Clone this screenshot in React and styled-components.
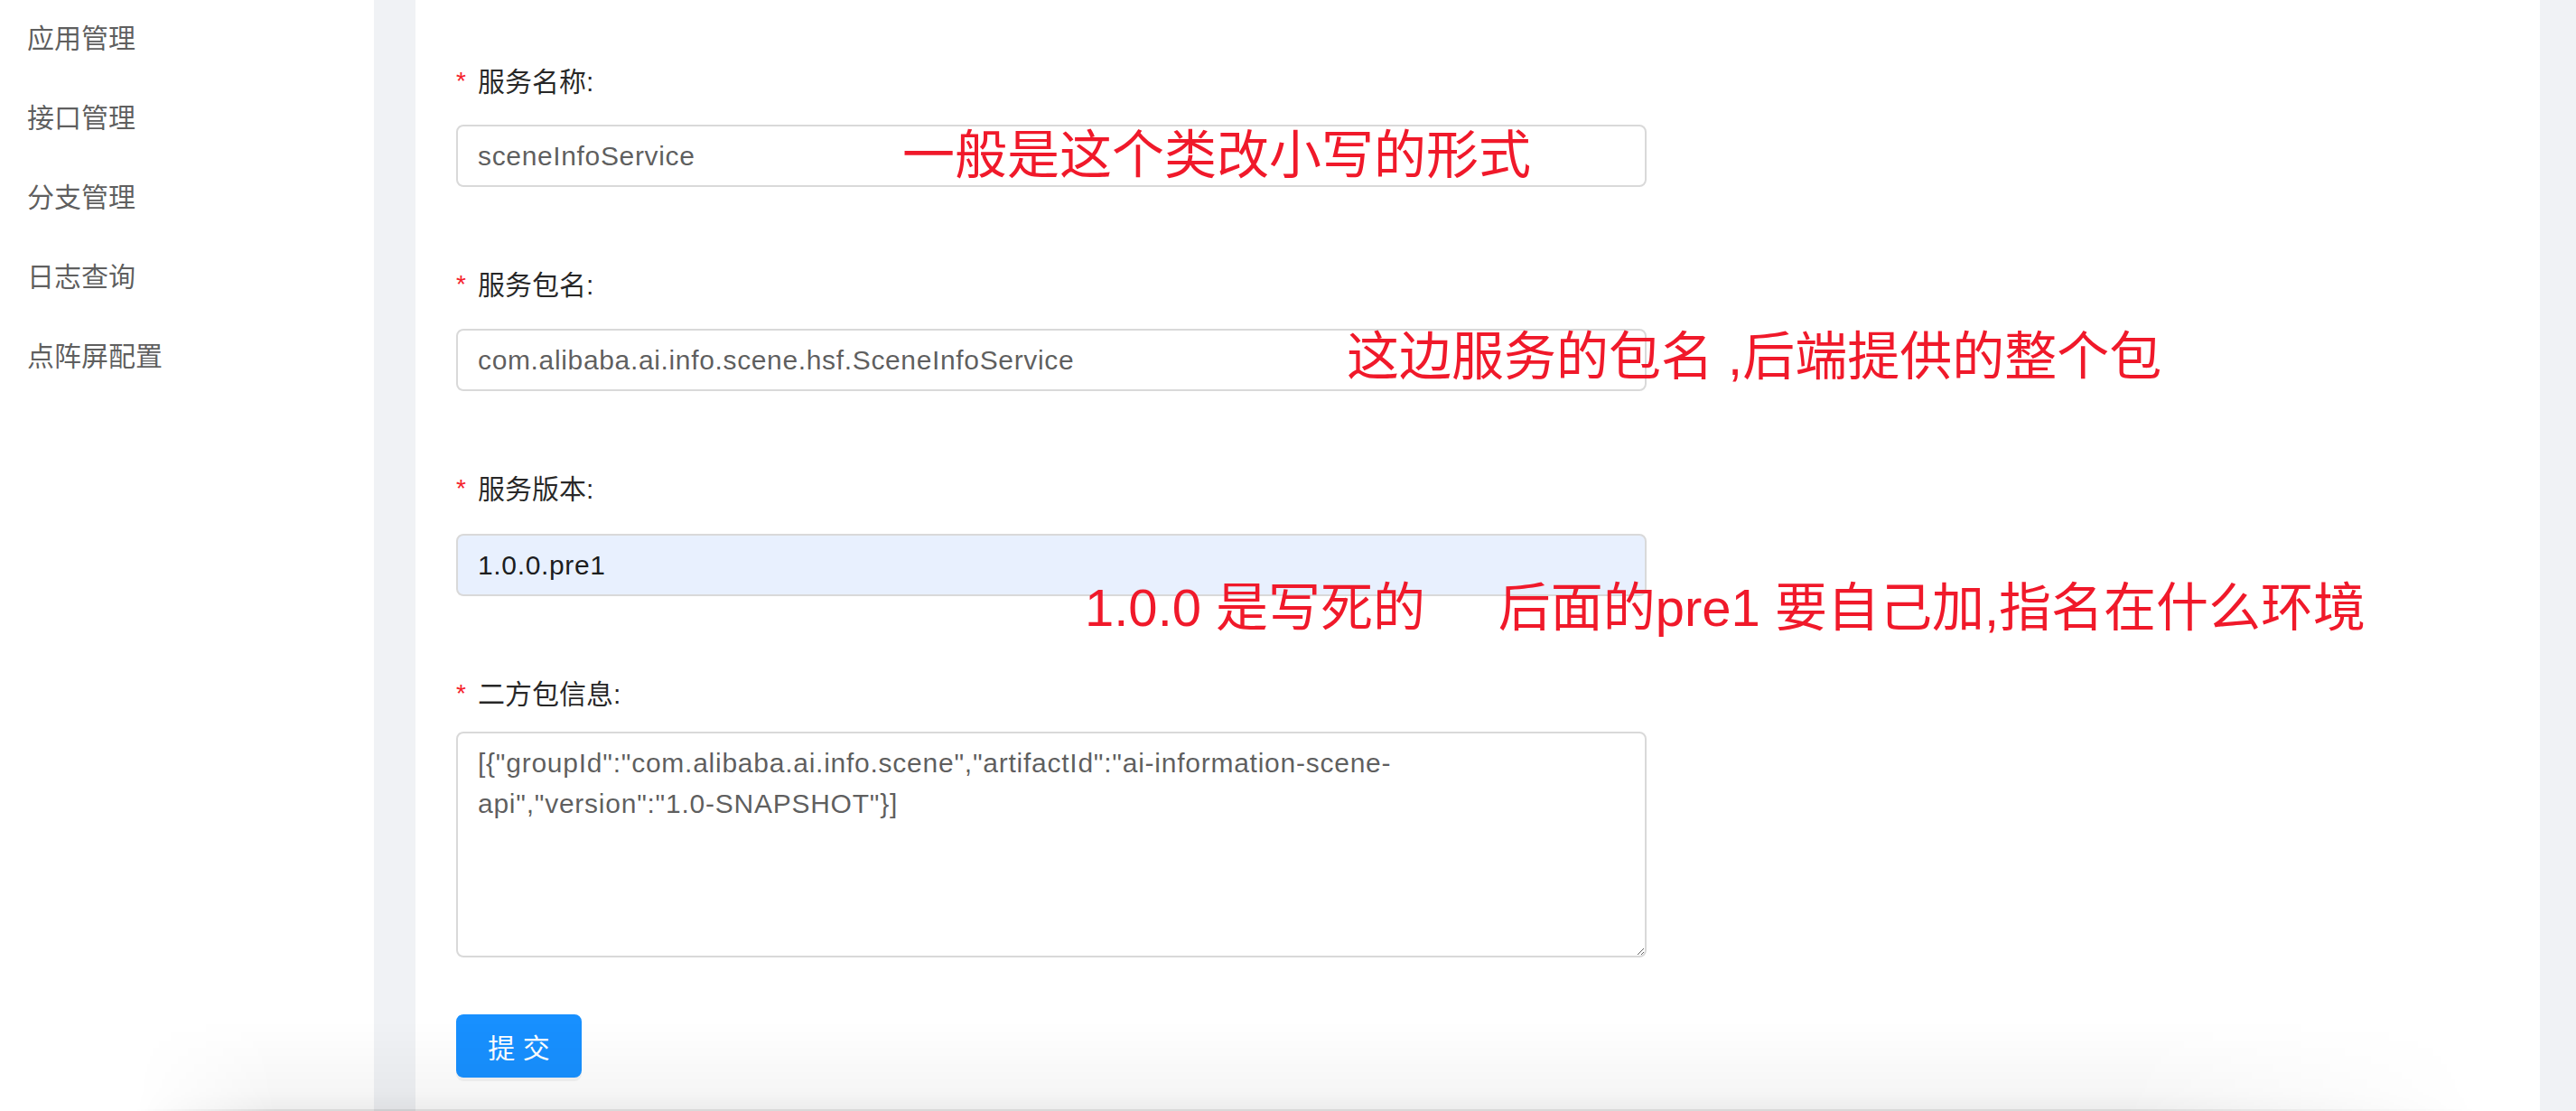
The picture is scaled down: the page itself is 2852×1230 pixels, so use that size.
import React from "react";
import styled, { createGlobalStyle } from "styled-components";

const Global = createGlobalStyle`
  html, body { margin: 0; padding: 0; background: #f0f2f5; }
  body { font-family: "Liberation Sans", "Noto Sans CJK SC", sans-serif; }
  * { box-sizing: border-box; }
`;

const FONT = `"Liberation Sans", "Noto Sans CJK SC", sans-serif`;

const Page = styled.div`
  position: relative;
  display: flex;
  width: 2852px;
  height: 1230px;
  overflow: hidden;
  background: #f0f2f5;
`;

const Sidebar = styled.nav`
  width: 414px;
  flex: none;
  background: #ffffff;
  display: flex;
  flex-direction: column;
  margin-top: -1px;
`;

const MenuItem = styled.div`
  height: 88px;
  line-height: 88px;
  padding-left: 30px;
  font-family: ${FONT};
  font-size: 30px;
  color: rgba(0, 0, 0, 0.65);
`;

const Main = styled.main`
  flex: 1;
  display: flex;
  padding: 0 40px 0 46px;
`;

const Card = styled.section`
  position: relative;
  flex: 1;
  background: #ffffff;
  padding: 65px 0 0 45px;
`;

const Form = styled.form`
  width: 1318px;
  display: flex;
  flex-direction: column;
`;

const FormItem = styled.div`
  display: flex;
  flex-direction: column;
  margin-bottom: ${(p) => p.$after}px;
`;

const Label = styled.label`
  display: flex;
  align-items: center;
  height: 45px;
  margin-bottom: ${(p) => p.$gap}px;
  font-family: ${FONT};
  font-size: 30px;
  color: rgba(0, 0, 0, 0.85);
`;

const Star = styled.span`
  color: #f5222d;
  font-family: "Liberation Sans", sans-serif;
  font-size: 28px;
  width: 24px;
  line-height: 1;
  padding-top: 4px;
`;

const Input = styled.input`
  width: 100%;
  height: 69px;
  border: 2px solid #d9d9d9;
  border-radius: 8px;
  padding: 0 22px;
  font-family: ${FONT};
  font-size: 30px;
  letter-spacing: 0.65px;
  color: ${(p) => (p.$filled ? "rgba(0,0,0,0.9)" : "rgba(0,0,0,0.65)")};
  background: ${(p) => (p.$filled ? "#e8f0fe" : "#ffffff")};
  outline: none;
`;

const TextArea = styled.textarea`
  width: 100%;
  height: 250px;
  border: 2px solid #d9d9d9;
  border-radius: 8px;
  padding: 10px 22px;
  font-family: ${FONT};
  font-size: 30px;
  letter-spacing: 0.75px;
  line-height: 45px;
  color: rgba(0, 0, 0, 0.65);
  background: #ffffff;
  outline: none;
  resize: vertical;
`;

const Submit = styled.button`
  width: 139px;
  height: 70px;
  border: 2px solid #1890ff;
  border-radius: 8px;
  background: #1890ff;
  color: #ffffff;
  font-family: ${FONT};
  font-size: 30px;
  box-shadow: 0 4px 0 rgba(0, 0, 0, 0.045);
  cursor: pointer;
  padding: 0;
`;

const Note = styled.div`
  position: absolute;
  left: ${(p) => p.$x}px;
  top: ${(p) => p.$y}px;
  font-family: ${FONT};
  font-size: 58px;
  line-height: 1;
  color: #f0192a;
  white-space: pre;
  pointer-events: none;
`;

const BottomShade = styled.div`
  position: absolute;
  left: 150px;
  right: 110px;
  bottom: 0;
  height: 100px;
  background: linear-gradient(to bottom, rgba(0,0,0,0) 0%, rgba(0,0,0,0.035) 80%, rgba(0,0,0,0.07) 100%);
  border-bottom: 2px solid rgba(0,0,0,0.15);
  -webkit-mask-image: linear-gradient(to right, transparent 0%, black 6%, black 85%, transparent 100%);
  mask-image: linear-gradient(to right, transparent 0%, black 6%, black 85%, transparent 100%);
  pointer-events: none;
`;

const menu = ["应用管理", "接口管理", "分支管理", "日志查询", "点阵屏配置"];

export default function App() {
  return (
    <>
      <Global />
      <Page>
        <Sidebar>
          {menu.map((m) => (
            <MenuItem key={m}>{m}</MenuItem>
          ))}
        </Sidebar>
        <Main>
          <Card>
            <Form onSubmit={(e) => e.preventDefault()}>
              <FormItem $after={83}>
                <Label $gap={28}><Star>*</Star>服务名称:</Label>
                <Input defaultValue="sceneInfoService" />
              </FormItem>
              <FormItem $after={83}>
                <Label $gap={29}><Star>*</Star>服务包名:</Label>
                <Input defaultValue="com.alibaba.ai.info.scene.hsf.SceneInfoService" />
              </FormItem>
              <FormItem $after={83}>
                <Label $gap={30}><Star>*</Star>服务版本:</Label>
                <Input $filled defaultValue="1.0.0.pre1" />
              </FormItem>
              <FormItem $after={63}>
                <Label $gap={22}><Star>*</Star>二方包信息:</Label>
                <TextArea defaultValue={'[{"groupId":"com.alibaba.ai.info.scene","artifactId":"ai-information-scene-api","version":"1.0-SNAPSHOT"}]'} />
              </FormItem>
              <div>
                <Submit type="submit">提 交</Submit>
              </div>
            </Form>
            <Note $x={539} $y={143}>一般是这个类改小写的形式</Note>
            <Note $x={1031} $y={366}>这边服务的包名 ,后端提供的整个包</Note>
            <Note $x={741} $y={644}>{"1.0.0 是写死的     后面的pre1 要自己加,指名在什么环境"}</Note>
          </Card>
        </Main>
        <BottomShade />
      </Page>
    </>
  );
}
